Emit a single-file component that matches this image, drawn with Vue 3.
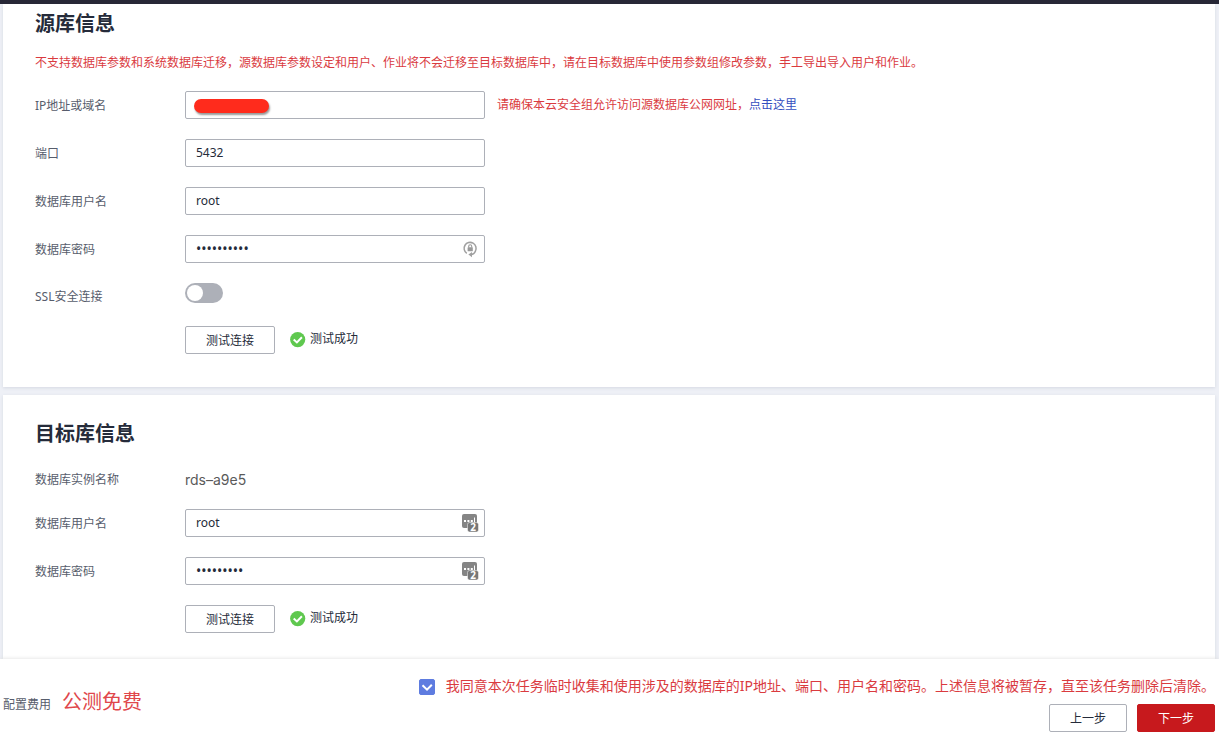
<script setup>
import { ref } from 'vue'

const host = ref('')
const port = ref('5432')
const sourceUser = ref('root')
const sourcePassword = ref('abcdefghij')
const ssl = ref(false)
const targetUser = ref('root')
const targetPassword = ref('abcdefghi')
const agreed = ref(true)
</script>

<template>
  <div class="page">
    <div class="topbar"></div>
    <main class="content">
      <section class="card source">
        <h2>源库信息</h2>
        <p class="warning">不支持数据库参数和系统数据库迁移，源数据库参数设定和用户、作业将不会迁移至目标数据库中，请在目标数据库中使用参数组修改参数，手工导出导入用户和作业。</p>
        <div class="row">
          <label for="host">IP地址或域名</label>
          <div class="field">
            <input id="host" v-model="host" type="text">
            <span class="redaction"></span>
          </div>
          <p class="hint">请确保本云安全组允许访问源数据库公网网址，<a href="#">点击这里</a></p>
        </div>
        <div class="row">
          <label for="port">端口</label>
          <div class="field"><input id="port" v-model="port" type="text"></div>
        </div>
        <div class="row">
          <label for="source-user">数据库用户名</label>
          <div class="field"><input id="source-user" v-model="sourceUser" type="text"></div>
        </div>
        <div class="row">
          <label for="source-password">数据库密码</label>
          <div class="field">
            <input id="source-password" v-model="sourcePassword" type="password">
            <svg class="adorn" viewBox="0 0 18 18" aria-hidden="true">
              <path d="M5.8 13.4A6 6 0 1 1 14.4 11.2Q13.2 14.4 10 14.6" fill="none" stroke="#a0a0a0" stroke-width="1.5" />
              <path d="M7.4 14.6 11 11.9V17.3z" fill="#a0a0a0" />
              <rect x="6.6" y="7.2" width="5.2" height="4" rx=".5" fill="#999" />
              <path d="M7.7 7.4V6.2a1.5 1.5 0 0 1 3 0v1.2" fill="none" stroke="#999" stroke-width="1.1" />
            </svg>
          </div>
        </div>
        <div class="row switch-row">
          <label for="ssl">SSL安全连接</label>
          <input id="ssl" v-model="ssl" class="switch" type="checkbox" role="switch">
        </div>
        <div class="row action">
          <button type="button">测试连接</button>
          <svg class="ok" viewBox="0 0 16 16" aria-hidden="true">
            <circle cx="7.7" cy="7.6" r="7.6" fill="#5fc84f" />
            <path d="M3.7 7.4 6.9 10.4 11.9 5.3" fill="none" stroke="#fff" stroke-width="2" />
          </svg>
          <span class="status">测试成功</span>
        </div>
      </section>

      <section class="card target">
        <h2>目标库信息</h2>
        <div class="row name-row">
          <span class="label">数据库实例名称</span>
          <span class="instance">rds–a9e5</span>
        </div>
        <div class="row">
          <label for="target-user">数据库用户名</label>
          <div class="field">
            <input id="target-user" v-model="targetUser" type="text">
            <svg class="adorn" viewBox="0 0 18 18" aria-hidden="true">
              <rect x="1" y="0" width="15" height="14" rx="2" fill="#858585" />
              <path d="M3 7h2M6.4 7h2M9.8 7h2" stroke="#fff" stroke-width="1.8" />
              <path d="M13.5 3.5v5" stroke="#fff" stroke-width="1" />
              <rect x="6.5" y="8.5" width="11" height="9.5" rx="2" fill="#777" stroke="#fff" stroke-width=".5" />
              <text x="12" y="17" text-anchor="middle">2</text>
            </svg>
          </div>
        </div>
        <div class="row">
          <label for="target-password">数据库密码</label>
          <div class="field">
            <input id="target-password" v-model="targetPassword" type="password">
            <svg class="adorn" viewBox="0 0 18 18" aria-hidden="true">
              <rect x="1" y="0" width="15" height="14" rx="2" fill="#858585" />
              <path d="M3 7h2M6.4 7h2M9.8 7h2" stroke="#fff" stroke-width="1.8" />
              <path d="M13.5 3.5v5" stroke="#fff" stroke-width="1" />
              <rect x="6.5" y="8.5" width="11" height="9.5" rx="2" fill="#777" stroke="#fff" stroke-width=".5" />
              <text x="12" y="17" text-anchor="middle">2</text>
            </svg>
          </div>
        </div>
        <div class="row action">
          <button type="button">测试连接</button>
          <svg class="ok" viewBox="0 0 16 16" aria-hidden="true">
            <circle cx="7.7" cy="7.6" r="7.6" fill="#5fc84f" />
            <path d="M3.7 7.4 6.9 10.4 11.9 5.3" fill="none" stroke="#fff" stroke-width="2" />
          </svg>
          <span class="status">测试成功</span>
        </div>
      </section>
    </main>

    <footer class="footer">
      <div class="cost"><span>配置费用</span><strong>公测免费</strong></div>
      <div class="finish">
        <div class="agree">
          <span class="check">
            <input id="agree" v-model="agreed" type="checkbox">
            <svg v-if="agreed" viewBox="0 0 16 16" aria-hidden="true">
              <path d="M3.5 6.2 8 10.6 12.8 5.8" fill="none" stroke="#fff" stroke-width="2" />
            </svg>
          </span>
          <label for="agree">我同意本次任务临时收集和使用涉及的数据库的IP地址、端口、用户名和密码。上述信息将被暂存，直至该任务删除后清除。</label>
        </div>
        <div class="buttons">
          <button type="button">上一步</button>
          <button type="button" class="primary">下一步</button>
        </div>
      </div>
    </footer>
  </div>
</template>

<style>
body {
  background: #eef0f6;
}
</style>

<style scoped>
.page,
.page * {
  box-sizing: border-box;
}
.page {
  display: flex;
  flex-direction: column;
  height: 100vh;
  overflow: hidden;
  color: #252b3a;
  font: 12px/20px "Noto Sans", "Noto Sans CJK SC", sans-serif;
}
h2,
p {
  margin: 0;
}
.topbar {
  flex: none;
  height: 4px;
  background: #272736;
}
.content {
  display: flex;
  flex: 1;
  flex-direction: column;
  gap: 8px;
  min-height: 0;
  padding: 0 4px 0 3px;
  overflow: hidden;
}
.card {
  flex: none;
  padding: 2px 32px 33px;
  background: #fff;
  box-shadow: 0 1px 3px #d5d9e2;
}
.target {
  padding-top: 21px;
}
h2 {
  font-size: 20px;
  font-weight: 700;
  line-height: 36px;
}
.source h2 {
  margin-bottom: 11px;
}
.target h2 {
  margin-bottom: 16px;
}
.warning {
  margin-bottom: 18px;
  color: #da3b3f;
}
.row {
  display: flex;
  align-items: center;
  margin-bottom: 20px;
}
.row > label,
.label {
  flex: none;
  width: 150px;
  padding-top: 2px;
  color: #575d6c;
}
.field {
  position: relative;
  flex: 0 1 300px;
}
.field input {
  display: block;
  width: 100%;
  height: 28px;
  padding: 0 10px 1px;
  border: 1px solid #adb0b8;
  border-radius: 2px;
  background: #fff;
  color: #252b3a;
  font: inherit;
}
.field input[type="password"] {
  font-size: 14px;
}
.redaction {
  position: absolute;
  top: 8px;
  left: 9px;
  width: 75px;
  height: 14px;
  border-radius: 7px;
  background: #ff2b1c;
  box-shadow: 1px 2px 2px #999;
}
.adorn {
  position: absolute;
  top: 5px;
  right: 6px;
  width: 18px;
  height: 18px;
  overflow: visible;
}
.adorn text {
  fill: #fff;
  font: bold 10px "Open Sans", sans-serif;
}
.hint {
  margin-left: 12px;
  color: #da3b3f;
}
a {
  color: #344ec0;
  text-decoration: none;
}
.switch-row {
  align-items: flex-start;
  margin-bottom: 19px;
}
.row.switch-row label {
  padding-top: 4px;
}
.switch {
  width: 38px;
  height: 20px;
  margin: 0;
  padding: 2px;
  border-radius: 10px;
  background: #adb0b8;
  appearance: none;
}
.switch::before {
  display: block;
  width: 16px;
  height: 16px;
  border-radius: 50%;
  background: #fff;
  content: "";
}
.switch:checked {
  background: #5e7ce0;
}
.switch:checked::before {
  margin-left: auto;
}
.action {
  margin: 0 0 0 150px;
}
button {
  height: 28px;
  padding: 1px 20px 0;
  border: 1px solid #adb0b8;
  border-radius: 2px;
  background: #fff;
  color: #252b3a;
  font: inherit;
}
.ok {
  width: 16px;
  height: 16px;
  margin: 0 4px 0 15px;
}
.status {
  padding-bottom: 2px;
}
.name-row {
  margin-bottom: 19px;
}
.instance {
  padding-top: 2px;
  color: #5a5a5a;
  font: 14px/20px Inter, sans-serif;
}
.footer {
  position: relative;
  display: flex;
  flex: none;
  justify-content: space-between;
  padding: 15px 4px 15px 3px;
  background: #fff;
  box-shadow: 0 0 4px #ddd;
}
.cost {
  display: flex;
  align-items: baseline;
  padding-top: 13px;
  color: #575d6c;
}
.cost strong {
  margin-left: 11px;
  color: #e0474b;
  font-size: 20px;
  font-weight: 400;
  line-height: 30px;
}
.agree {
  display: flex;
  align-items: center;
  color: #da3b3f;
  font-size: 14px;
  line-height: 24px;
}
.check {
  position: relative;
  width: 16px;
  height: 16px;
  margin: 2px 11px 0 0;
}
.check input {
  display: block;
  width: 16px;
  height: 16px;
  margin: 0;
  border: 1px solid #5e7ce0;
  border-radius: 2px;
  appearance: none;
}
.check input:checked {
  background: #5e7ce0;
}
.check svg {
  position: absolute;
  inset: 0;
  pointer-events: none;
}
.buttons {
  display: flex;
  gap: 10px;
  justify-content: flex-end;
  margin-top: 6px;
}
.buttons .primary {
  border-color: #c7191d;
  background: #c7191d;
  color: #fff;
}
</style>
